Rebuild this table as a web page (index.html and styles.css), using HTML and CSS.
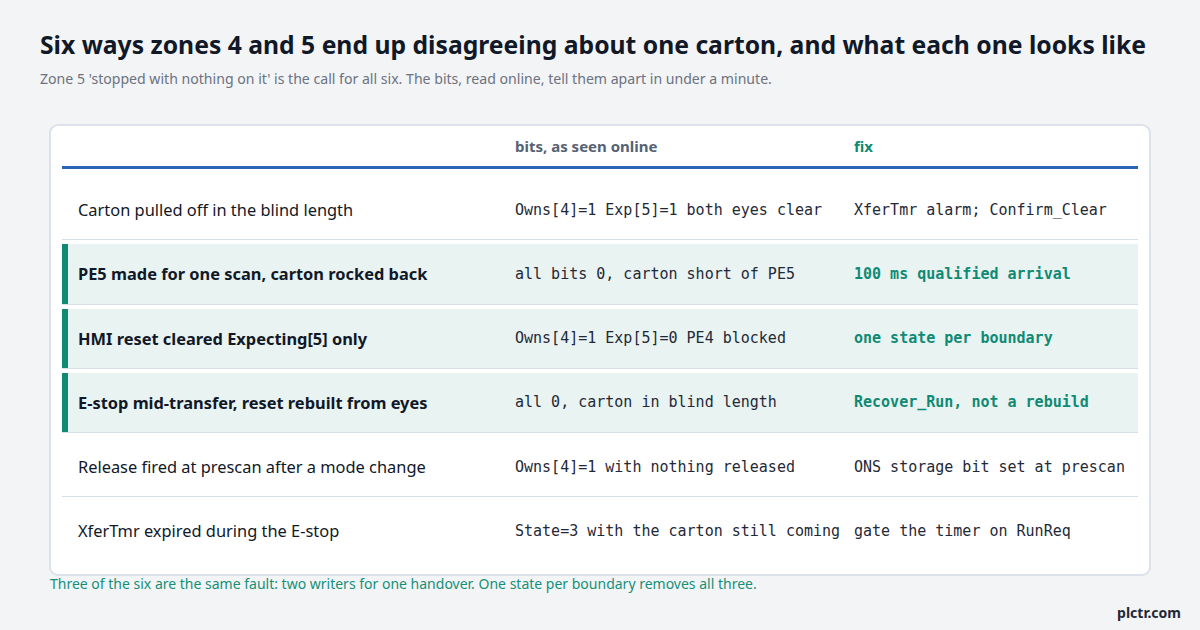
FILE: index.html
```html
<!DOCTYPE html>
<html lang="en">
<head>
<meta charset="utf-8">
<title>Six ways zones 4 and 5 end up disagreeing</title>
<link rel="stylesheet" href="styles.css">
</head>
<body>
<main class="page">
  <h1 class="title">Six ways zones 4 and 5 end up disagreeing about one carton, and what each one looks like</h1>
  <p class="subtitle">Zone 5 'stopped with nothing on it' is the call for all six. The bits, read online, tell them apart in under a minute.</p>

  <section class="card">
    <div class="row head">
      <div class="cell c1"></div>
      <div class="cell c2 h-bits">bits, as seen online</div>
      <div class="cell c3 h-fix">fix</div>
    </div>
    <div class="rows">
      <div class="row">
        <div class="cell c1">Carton pulled off in the blind length</div>
        <div class="cell c2 mono">Owns[4]=1 Exp[5]=1 both eyes clear</div>
        <div class="cell c3 mono">XferTmr alarm; Confirm_Clear</div>
      </div>
      <div class="row hl">
        <div class="cell c1">PE5 made for one scan, carton rocked back</div>
        <div class="cell c2 mono">all bits 0, carton short of PE5</div>
        <div class="cell c3 mono">100 ms qualified arrival</div>
      </div>
      <div class="row hl">
        <div class="cell c1">HMI reset cleared Expecting[5] only</div>
        <div class="cell c2 mono">Owns[4]=1 Exp[5]=0 PE4 blocked</div>
        <div class="cell c3 mono">one state per boundary</div>
      </div>
      <div class="row hl">
        <div class="cell c1">E-stop mid-transfer, reset rebuilt from eyes</div>
        <div class="cell c2 mono">all 0, carton in blind length</div>
        <div class="cell c3 mono">Recover_Run, not a rebuild</div>
      </div>
      <div class="row">
        <div class="cell c1">Release fired at prescan after a mode change</div>
        <div class="cell c2 mono">Owns[4]=1 with nothing released</div>
        <div class="cell c3 mono">ONS storage bit set at prescan</div>
      </div>
      <div class="row last">
        <div class="cell c1">XferTmr expired during the E-stop</div>
        <div class="cell c2 mono">State=3 with the carton still coming</div>
        <div class="cell c3 mono">gate the timer on RunReq</div>
      </div>
    </div>
  </section>
  <p class="note">Three of the six are the same fault: two writers for one handover. One state per boundary removes all three.</p>
  <div class="brand">plctr.com</div>
</main>
</body>
</html>
```

FILE: styles.css
```css
* { box-sizing: border-box; }
html, body {
  margin: 0;
  padding: 0;
  width: 1200px;
  height: 630px;
  background: #f3f4f6;
  overflow: hidden;
}
body {
  font-family: "Noto Sans", "Open Sans", sans-serif;
  color: #111827;
}
.page {
  display: flex;
  flex-direction: column;
  padding: 29px 19px 0 40px;
  height: 630px;
}
.title {
  margin: 0;
  font-size: 24.7px;
  line-height: 32px;
  font-weight: 700;
  color: #111827;
}
.subtitle {
  margin: 8px 0 0;
  font-size: 14.1px;
  line-height: 20px;
  color: #6b7280;
}
.card {
  margin: 35px 0 0 9px;
  width: 1102px;
  background: #ffffff;
  border: 2px solid #dde2ea;
  border-radius: 9px;
  padding: 0 11px 12px;
}
.row {
  display: grid;
  grid-template-columns: 453px 339px 1fr;
  align-items: center;
  height: 60.25px;
  border-bottom: 1px solid #d9dfe8;
}
.row.last { border-bottom-color: transparent; }
.row.head {
  height: 43px;
  border-bottom: 3px solid #2a64b7;
  font-size: 15px;
  font-weight: 700;
}
.rows {
  display: flex;
  flex-direction: column;
  gap: 4px;
  padding-top: 11px;
}
.cell { white-space: nowrap; }
.c1 {
  padding-left: 16px;
  font-size: 16.4px;
}
.mono {
  font-family: "DejaVu Sans Mono", monospace;
  font-size: 15px;
  color: #1f2937;
}
.h-bits { color: #556274; }
.h-fix { color: #0f8a74; }
.row.hl {
  background: #e9f3f2;
  box-shadow: inset 6px 0 0 #128a73;
}
.row.hl .c1 { font-weight: 700; }
.row.hl .c3 {
  font-weight: 700;
  color: #0f8a74;
}
.note {
  margin: 0 0 0 10px;
  font-size: 14px;
  line-height: 16px;
  color: #149079;
}
.brand {
  margin-top: auto;
  margin-bottom: 8px;
  align-self: flex-end;
  font-size: 14px;
  font-weight: 700;
  color: #1f2937;
}
```
